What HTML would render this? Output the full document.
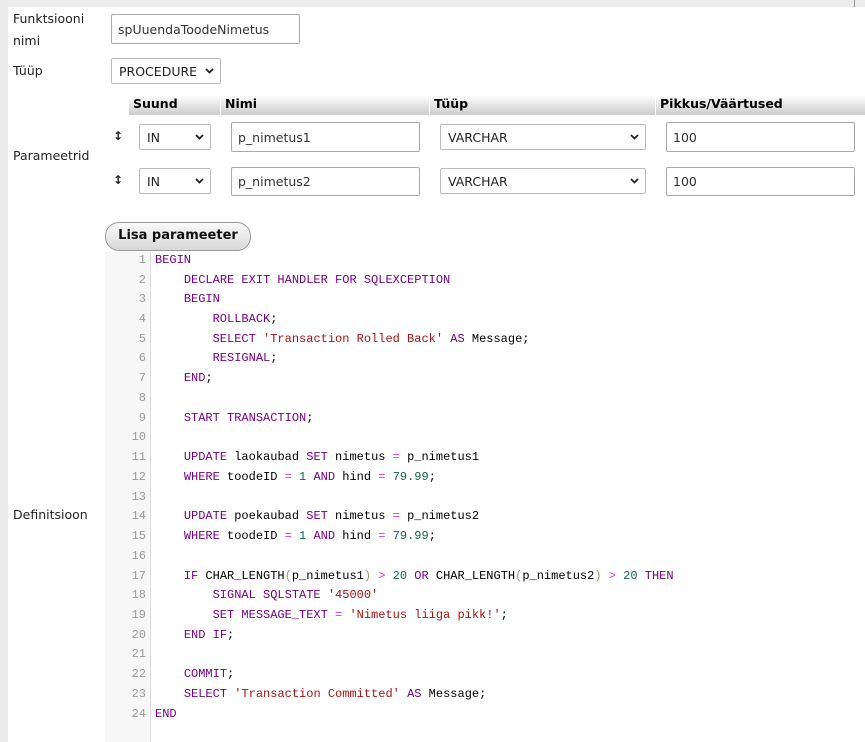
<!DOCTYPE html>
<html><head><meta charset="utf-8"><style>
*{box-sizing:border-box;margin:0;padding:0}
body{width:865px;height:742px;background:#ececec;position:relative;overflow:hidden;font-family:"DejaVu Sans","Liberation Sans",sans-serif;font-size:12px;color:#222}
.main{position:absolute;left:8px;top:7px;width:857px;height:735px;background:#fff}
.a{position:absolute}
.lbl{position:absolute;left:13px;font-size:12.5px;line-height:22px;color:#222}
.inp{position:absolute;border:1px solid #aaa;border-radius:2px;background:#fff;font-size:12.5px;padding-left:6px;display:flex;align-items:center;color:#333}
.sel{position:absolute;border:1px solid #bbb;border-radius:2px;background:#fff;font-size:12.5px;padding-left:7px;display:flex;align-items:center;color:#222}
.sel svg{position:absolute;right:6px;top:50%;margin-top:-3px}
.th{position:absolute;top:95px;height:20px;background:linear-gradient(#fff,#ccc);font-weight:bold;font-size:12.5px;line-height:18px;padding-left:4px;color:#000}
.arr{position:absolute;left:113px;font-size:12px;font-weight:bold}
.btn{position:absolute;left:105px;top:222px;width:146px;height:29px;border:1px solid #999;border-radius:14px;background:linear-gradient(#fafafa,#d8d8d8);font-weight:bold;font-size:13px;text-align:center;line-height:26px;color:#111}
.code{position:absolute;left:105px;top:252px;width:760px;height:490px;background:#fff}
.gut{position:absolute;left:0;top:0;width:46px;height:490px;background:#f7f7f7;border-right:1px solid #ddd}
.ln{position:absolute;left:0;width:41px;text-align:right;color:#999;font-family:"Liberation Mono",monospace;font-size:12px}
.cl{position:absolute;left:50px;white-space:pre;font-family:"Liberation Mono",monospace;font-size:12px;color:#000}
.k{color:#708}.s{color:#a11}.n{color:#164}.o{color:#d3d}.p{color:#997}
</style></head><body>
<div class="a" style="left:854px;top:0;width:1px;height:7px;background:#999"></div>
<div class="main"></div>
<div class="lbl" style="top:8px">Funktsiooni<br>nimi</div>
<div class="inp" style="left:111px;top:14px;width:189px;height:30px">spUuendaToodeNimetus</div>
<div class="lbl" style="top:60px">Tüüp</div>
<div class="sel" style="left:111px;top:58px;width:110px;height:26px">PROCEDURE<svg width="9" height="6"><path d="M1 1l3.5 3.5L8 1" stroke="#222" stroke-width="1.8" fill="none"/></svg></div>
<div class="th" style="left:129px;width:91px">Suund</div>
<div class="th" style="left:221px;width:208px">Nimi</div>
<div class="th" style="left:430px;width:225px">Tüüp</div>
<div class="th" style="left:656px;width:209px">Pikkus/Väärtused</div>
<div class="lbl" style="top:145px">Parameetrid</div>

<div class="arr" style="top:129px">↕</div>
<div class="sel" style="left:139px;top:124px;width:72px;height:26px">IN<svg width="9" height="6"><path d="M1 1l3.5 3.5L8 1" stroke="#222" stroke-width="1.8" fill="none"/></svg></div>
<div class="inp" style="left:231px;top:122px;width:189px;height:30px">p_nimetus1</div>
<div class="sel" style="left:440px;top:124px;width:206px;height:26px">VARCHAR<svg width="9" height="6"><path d="M1 1l3.5 3.5L8 1" stroke="#222" stroke-width="1.8" fill="none"/></svg></div>
<div class="inp" style="left:666px;top:122px;width:189px;height:30px">100</div>

<div class="arr" style="top:173px">↕</div>
<div class="sel" style="left:139px;top:168px;width:72px;height:26px">IN<svg width="9" height="6"><path d="M1 1l3.5 3.5L8 1" stroke="#222" stroke-width="1.8" fill="none"/></svg></div>
<div class="inp" style="left:231px;top:167px;width:189px;height:29px">p_nimetus2</div>
<div class="sel" style="left:440px;top:168px;width:206px;height:26px">VARCHAR<svg width="9" height="6"><path d="M1 1l3.5 3.5L8 1" stroke="#222" stroke-width="1.8" fill="none"/></svg></div>
<div class="inp" style="left:666px;top:167px;width:189px;height:29px">100</div>

<div class="btn">Lisa parameeter</div>
<div class="lbl" style="top:504px">Definitsioon</div>

<div class="code">
<div class="gut"></div>
<div class="ln" style="top:1px">1</div><div class="cl" style="top:1px"><span class="k">BEGIN</span></div>
<div class="ln" style="top:21px">2</div><div class="cl" style="top:21px">    <span class="k">DECLARE EXIT HANDLER FOR SQLEXCEPTION</span></div>
<div class="ln" style="top:40px">3</div><div class="cl" style="top:40px">    <span class="k">BEGIN</span></div>
<div class="ln" style="top:60px">4</div><div class="cl" style="top:60px">        <span class="k">ROLLBACK</span>;</div>
<div class="ln" style="top:80px">5</div><div class="cl" style="top:80px">        <span class="k">SELECT</span> <span class="s">'Transaction Rolled Back'</span> <span class="k">AS</span> Message;</div>
<div class="ln" style="top:99px">6</div><div class="cl" style="top:99px">        <span class="k">RESIGNAL</span>;</div>
<div class="ln" style="top:119px">7</div><div class="cl" style="top:119px">    <span class="k">END</span>;</div>
<div class="ln" style="top:139px">8</div>
<div class="ln" style="top:159px">9</div><div class="cl" style="top:159px">    <span class="k">START TRANSACTION</span>;</div>
<div class="ln" style="top:178px">10</div>
<div class="ln" style="top:198px">11</div><div class="cl" style="top:198px">    <span class="k">UPDATE</span> laokaubad <span class="k">SET</span> nimetus <span class="o">=</span> p_nimetus1</div>
<div class="ln" style="top:218px">12</div><div class="cl" style="top:218px">    <span class="k">WHERE</span> toodeID <span class="o">=</span> <span class="n">1</span> <span class="k">AND</span> hind <span class="o">=</span> <span class="n">79.99</span>;</div>
<div class="ln" style="top:238px">13</div>
<div class="ln" style="top:257px">14</div><div class="cl" style="top:257px">    <span class="k">UPDATE</span> poekaubad <span class="k">SET</span> nimetus <span class="o">=</span> p_nimetus2</div>
<div class="ln" style="top:277px">15</div><div class="cl" style="top:277px">    <span class="k">WHERE</span> toodeID <span class="o">=</span> <span class="n">1</span> <span class="k">AND</span> hind <span class="o">=</span> <span class="n">79.99</span>;</div>
<div class="ln" style="top:297px">16</div>
<div class="ln" style="top:317px">17</div><div class="cl" style="top:317px">    <span class="k">IF</span> CHAR_LENGTH<span class="p">(</span>p_nimetus1<span class="p">)</span> <span class="o">&gt;</span> <span class="n">20</span> <span class="k">OR</span> CHAR_LENGTH<span class="p">(</span>p_nimetus2<span class="p">)</span> <span class="o">&gt;</span> <span class="n">20</span> <span class="k">THEN</span></div>
<div class="ln" style="top:336px">18</div><div class="cl" style="top:336px">        <span class="k">SIGNAL SQLSTATE</span> <span class="s">'45000'</span></div>
<div class="ln" style="top:356px">19</div><div class="cl" style="top:356px">        <span class="k">SET MESSAGE_TEXT</span> <span class="o">=</span> <span class="s">'Nimetus liiga pikk!'</span>;</div>
<div class="ln" style="top:376px">20</div><div class="cl" style="top:376px">    <span class="k">END IF</span>;</div>
<div class="ln" style="top:395px">21</div>
<div class="ln" style="top:415px">22</div><div class="cl" style="top:415px">    <span class="k">COMMIT</span>;</div>
<div class="ln" style="top:435px">23</div><div class="cl" style="top:435px">    <span class="k">SELECT</span> <span class="s">'Transaction Committed'</span> <span class="k">AS</span> Message;</div>
<div class="ln" style="top:455px">24</div><div class="cl" style="top:455px"><span class="k">END</span></div>
</div>
</body></html>
